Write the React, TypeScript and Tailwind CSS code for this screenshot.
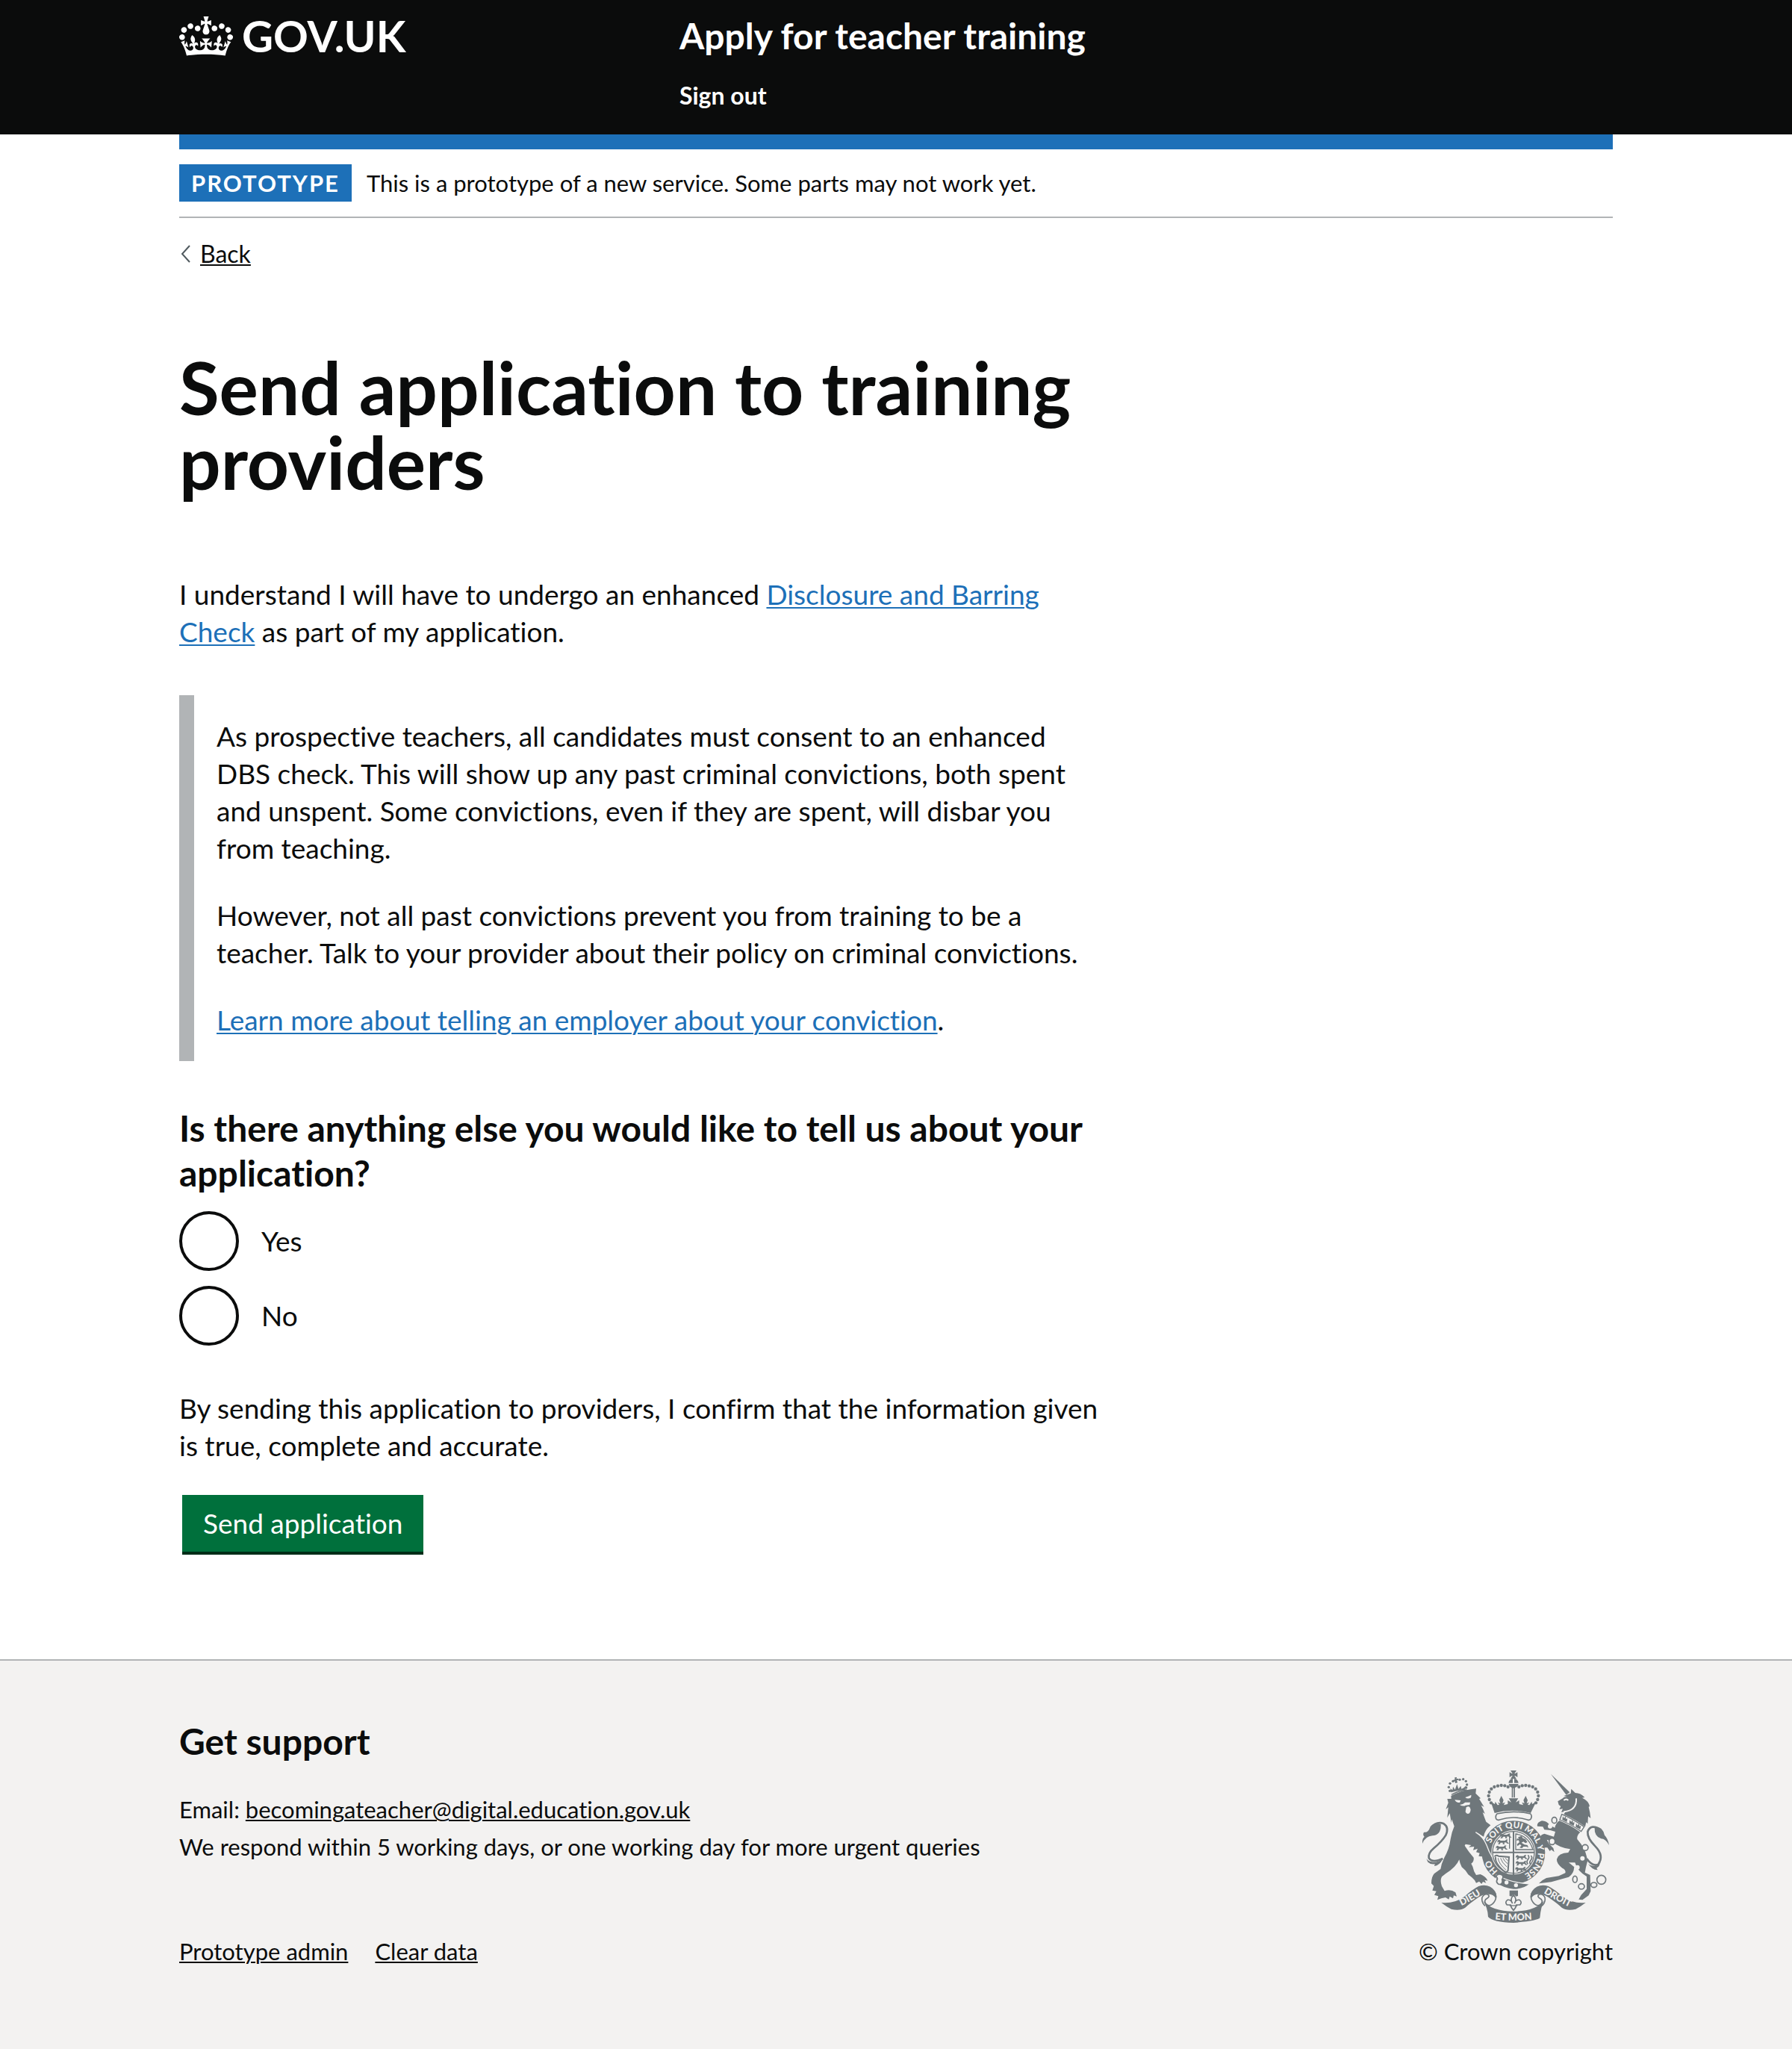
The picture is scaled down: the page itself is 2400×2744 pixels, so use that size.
import type { ReactNode } from "react";

const container = "mx-auto w-full max-w-[1920px]";
const darkLink = "underline decoration-2 underline-offset-2";
const blueLink = "text-[#1d70b8] underline decoration-2 underline-offset-[3px]";

function Crown() {
  return (
    <svg viewBox="0 0 132 97" className="h-[53px] w-[72px] shrink-0" fill="currentColor" aria-hidden="true">
      <path
        fillRule="evenodd"
        d="M25 30.2c3.5 1.5 7.7-.2 9.1-3.7 1.5-3.6-.2-7.8-3.9-9.2-3.6-1.4-7.6.3-9.1 3.9-1.4 3.5.3 7.5 3.9 9zM9 39.5c3.6 1.5 7.8-.2 9.2-3.7 1.5-3.6-.2-7.8-3.9-9.1-3.6-1.5-7.6.2-9.1 3.8-1.4 3.5.3 7.5 3.8 9zM4.4 57.2c3.5 1.5 7.7-.2 9.1-3.8 1.5-3.6-.2-7.7-3.9-9.1-3.5-1.5-7.6.3-9.1 3.8-1.4 3.5.3 7.6 3.9 9.1zm38.3-21.4c3.5 1.5 7.7-.2 9.1-3.8 1.5-3.6-.2-7.7-3.9-9.1-3.6-1.5-7.6.3-9.1 3.8-1.3 3.6.4 7.7 3.9 9.1zm64.4-5.6c-3.6 1.5-7.8-.2-9.1-3.7-1.5-3.6.2-7.8 3.8-9.2 3.6-1.4 7.7.3 9.2 3.9 1.3 3.5-.4 7.5-3.9 9zm15.9 9.3c-3.6 1.5-7.7-.2-9.1-3.7-1.5-3.6.2-7.8 3.7-9.1 3.6-1.5 7.7.2 9.2 3.8 1.5 3.5-.3 7.5-3.8 9zm4.7 17.7c-3.6 1.5-7.8-.2-9.2-3.8-1.5-3.6.2-7.7 3.9-9.1 3.6-1.5 7.7.3 9.2 3.8 1.3 3.5-.4 7.6-3.9 9.1zM89.3 35.8c-3.6 1.5-7.8-.2-9.2-3.8-1.4-3.6.2-7.7 3.9-9.1 3.6-1.5 7.7.3 9.2 3.8 1.4 3.6-.3 7.7-3.9 9.1zM69.7 17.7l8.9 4.7V9.3l-8.9 2.8c-.2-.3-.5-.6-.9-.9L72.4 0H59.6l3.5 11.2c-.3.3-.6.5-.9.9l-8.8-2.8v13.1l8.8-4.7c.3.3.6.7.9.9l-5 15.4v.1c-.2.8-.4 1.6-.4 2.4 0 4.1 3.1 7.5 7 8.1h.2c.3 0 .7.1 1 .1.4 0 .7 0 1-.1h.2c4-.6 7.1-4.1 7.1-8.1 0-.8-.1-1.7-.4-2.4V34l-5.1-15.4c.4-.2.7-.6 1-.9zM66 92.8c16.9 0 32.8 1.1 47.1 3.2 4-16.9 8.9-26.7 14-33.5l-9.6-3.4c1 4.9 1.1 7.2 0 10.2-1.5-1.4-3-4.3-4.2-8.7L108.6 76c2.8-2 5-3.2 7.5-3.3-4.4 9.4-10 11.9-13.6 11.2-4.3-.8-6.3-4.6-5.6-7.9 1-4.7 5.7-5.9 8-.5 4.3-8.7-3-11.4-7.6-8.8 7.1-7.2 7.9-13.5 2.1-21.1-8 6.1-8.1 12.3-4.5 20.8-4.7-5.4-12.1-2.5-9.5 6.2 3.4-5.2 7.9-2 7.2 3.1-.6 4.3-6.4 7.8-13.5 7.2-10.3-.9-10.9-8-11.2-13.8 2.5-.5 7.1 1.8 11 7.3L80.2 60c-4.1 4.4-8 5.3-12.3 5.4 1.4-4.4 8-11.6 8-11.6H55.5s6.4 7.2 7.9 11.6c-4.2-.1-8-1-12.3-5.4l1.4 16.4c3.9-5.5 8.5-7.7 10.9-7.3-.3 5.8-.9 12.8-11.1 13.8-7.2.6-12.9-2.9-13.5-7.2-.7-5 3.8-8.3 7.1-3.1 2.7-8.7-4.6-11.6-9.4-6.2 3.7-8.5 3.6-14.7-4.6-20.8-5.8 7.6-5 13.9 2.2 21.1-4.7-2.6-11.9.1-7.7 8.8 2.3-5.5 7.1-4.2 8.1.5.7 3.3-1.3 7.1-5.7 7.9-3.5.7-9-1.8-13.5-11.2 2.5.1 4.7 1.3 7.5 3.3l-4.7-15.4c-1.2 4.4-2.7 7.2-4.3 8.7-1.1-3-.9-5.3 0-10.2l-9.5 3.4c5 6.9 9.9 16.7 14 33.5 14.8-2.1 30.8-3.2 47.7-3.2z"
      />
    </svg>
  );
}

/* Half of the dots on the arches of the large crown; the rest are mirrored about x = 438. */
const archDots = [
  [416, 126],
  [403, 121],
  [389, 120],
  [375, 122],
  [361, 126],
  [349, 134],
  [341, 147],
  [338, 162],
  [341, 177],
  [348, 190],
];

const lionCrownDots = [
  [182, 142],
  [178, 127],
  [183, 112],
  [195, 103],
  [222, 97],
  [236, 95],
  [247, 103],
  [251, 117],
  [248, 129],
];

const mottoGap = "\u00a0".repeat(8);

function PassantLion({ x, y }: { x: number; y: number }) {
  return (
    <path
      transform={`translate(${x} ${y})`}
      d="M0 3l7-3 5 4 18 0 6-5 6 1-4 4 2 6 7 5-8 1-5-5-8 1 3 6-8 0 0-6-9 0-3 6-8 0 4-5-1-5-5 4z"
    />
  );
}

function RoyalArms() {
  return (
    <svg viewBox="72 60 750 612" className="h-[204px] w-[250px]" fill="#6f777b" role="img" aria-label="Royal coat of arms">
      <defs>
        <path id="garter-line" d="M438 487A98 98 0 1 1 438.1 487" />
        <path id="dieu-line" d="M208 613Q276 582 326 546" />
        <path id="mon-line" d="M346 657Q438 667 530 657" />
        <path id="droit-line" d="M550 547Q600 578 672 613" />
      </defs>

      {/* Large crown */}
      <path d="M426 60h24l-8 12 2 1 10-6v20l-10-6-2 1 8 12h-24l8-12-2-1-10 6V67l10 6 2-1z" />
      <path d="M418 110q2-15 17-17v17zM441 93q15 2 17 17h-17zM419 114h39q-2 12-14 15v40h-5v-38h-3v38h-5v-40q-10-3-12-15z" />
      {archDots.map(([x, y]) => (
        <g key={`${x}-${y}`}>
          <circle cx={x} cy={y} r="6.5" />
          <circle cx={876 - x} cy={y} r="6.5" />
        </g>
      ))}
      <path d="M347 186l16 9 2-10 9 14 7-1-6-10 10 4-4-13 8-17 9 17-4 13 10-4-5 11 16-4 0-15 14 8-10-16h38l-10 16 14-8 0 15 16 4-5-11 10 4-4-13 9-17 8 17-4 13 10-4-6 10 7 1 9-14 2 10 16-9-22 45q-75-20-145 0z" />
      <path
        d="M372 234q66-16 134 0 8 8 2 20-6 8-14 4-56-18-112 0-8 4-14-4-4-12 4-20z"
        fill="#f3f2f1"
        stroke="#6f777b"
        strokeWidth="5"
      />

      {/* Garter */}
      <circle cx="438" cy="389" r="108" fill="#f3f2f1" stroke="#6f777b" strokeWidth="38" />
      <circle cx="438" cy="389" r="84" fill="none" stroke="#6f777b" strokeWidth="4" />
      <text fill="#f3f2f1" fontFamily="Lato, sans-serif" fontWeight="900" fontSize="35">
        <textPath href="#garter-line" startOffset="11%">{`HO${mottoGap}SOIT QUI MAL Y PENSE`}</textPath>
      </text>

      {/* Shield quarters */}
      <path d="M354 386h168v6H354zM435 306h6v180h-6z" />
      <PassantLion x={384} y={314} />
      <PassantLion x={374} y={338} />
      <PassantLion x={368} y={362} />
      <PassantLion x={448} y={400} />
      <PassantLion x={448} y={424} />
      <PassantLion x={446} y={448} />
      <path d="M496 400q8 8 0 18t0 18M508 402q8 8 0 18t-2 16" fill="none" stroke="#6f777b" strokeWidth="5" />
      <path d="M422 318l0 56M414 316l8 10" fill="none" stroke="#6f777b" strokeWidth="4" />
      <path d="M447 378v-63q52 8 69 63z" fill="none" stroke="#6f777b" strokeWidth="4" />
      <path
        d="M456 328l14-5 6 9 10 4 8 12-8 4-8-6-8 4 12 8 12 2 4 10-8-4-12 0-6 6-10-2 8-8-6-6-10 8-2-8 10-8-4-8-8 2 2-8 8 0z"
      />
      <path d="M362 406q6-8 16-2l42 4-4 54-10 10M366 408q-4 26 40 62" fill="none" stroke="#6f777b" strokeWidth="6" />
      <path
        d="M376 412q2 22 32 48M386 412q4 16 26 36M396 412q4 12 18 22M406 412q2 6 10 10"
        fill="none"
        stroke="#6f777b"
        strokeWidth="3"
      />

      {/* Strap and pendant */}
      <path d="M370 480q58 32 134 36-24 22-66 22-38-2-72-26z" stroke="#f3f2f1" strokeWidth="4" />
      <circle cx="410" cy="510" r="8" fill="#f3f2f1" />
      <circle cx="448" cy="521" r="8" fill="#f3f2f1" />
      <path
        d="M392 480q-18-8-24 6 10 8 2 18 4 18 18 12 8-6 4-18 8-10 0-18z"
        fill="#f3f2f1"
        stroke="#6f777b"
        strokeWidth="5"
      />
      <path d="M422 542h34v22l-8 2q-10-16-18 0l-8-2z" />
      <path
        d="M438 560q16 18 4 34 6-16 20-14 12 8 2 20h-14q-2 12-12 22-10-10-12-22h-14q-10-12 2-20 14-2 20 14-12-16 4-34z"
        fill="#f3f2f1"
        stroke="#6f777b"
        strokeWidth="5"
      />
      <path d="M422 603h32" stroke="#6f777b" strokeWidth="4" />

      {/* Lion */}
      {lionCrownDots.map(([x, y]) => (
        <circle key={`${x}-${y}`} cx={x} cy={y} r="5" />
      ))}
      <path d="M202 88l8-1-1 7 7-2 1 8-7-1 3 10-9 2-2-9-6 4-2-7 8-2z" />
      <path d="M187 148l-3-16 9 7 2-14 8 12 8-22 6 19 9-12 3 12 9-4 8-8-1 15q-30 2-58 11z" />
      <path d="M189 157q28-16 62-19" fill="none" stroke="#6f777b" strokeWidth="4" />
      <path d="M172 174L188 174L187 162Q224 142 266 136L288 133L286 152L306 172L300 174L320 206L308 200Q315 212 323 234L314 228Q322 252 328 266L346 280Q322 300 318 326L290 308Q322 336 332 365Q336 386 350 406L344 416L334 406L334 420L322 412L316 418L312 406L298 404L302 392L288 388L294 374L276 380L280 366L258 368L268 360L245 356L242 362Q260 390 278 410Q280 426 268 434L274 446Q278 466 288 480L305 477Q328 486 334 503L322 500L328 512L315 507L310 516L300 506L288 512L282 501Q270 488 256 478Q248 462 230 448Q222 432 220 418Q208 448 165 475L150 487Q142 502 150 525L161 544Q186 536 205 550L210 566L198 562L195 574L182 566L178 578L165 570L148 574L132 580L136 565L120 560L128 545L112 542L118 524L108 514Q108 486 120 474L145 456Q148 434 160 410Q180 376 185 336Q190 306 200 284L190 256L188 270L182 232L172 250L176 208L166 216L176 190Z" />
      <path
        d="M202 178l24 2-4 9q-14 2-20-11zM244 168q14-4 24-10 2 12-8 14-10 2-16-4zM222 198q14-2 22-10l20 0-2 10-16 2q-10 6-24-2zM248 208q14-10 18 10-2 16-12 16-12-4-8-14z"
        fill="#f3f2f1"
      />
      <path d="M286 308q32 20 44 52 8 24 22 48" fill="none" stroke="#f3f2f1" strokeWidth="4" />
      <path
        d="M106 290q24-28 52-16 22 14 8 46-16 26-48 52-24 20-20 40 14 22 56 2"
        fill="none"
        stroke="#6f777b"
        strokeWidth="8"
      />
      <path d="M146 276q2 44-34 46-28 2-40 32-2-20 8-28-8-8-2-18 18 2 24-18 14-24 44-14zM88 414q8 12 26 14 20 2 40-12-14 26-34 28l2-8q-18 2-28-8z" />

      {/* Unicorn */}
      <path d="M588 74l76 74-14 10z" />
      <path d="M640 162l28-10 2-18 16 16q22 0 38 18l-10 2q26 12 30 34l-4 2q6 22 8 46l-10-8-2 30-6-6-4 18q-30-24-86-50l8-12-18 4 6-14-14 2 6-12-8-6-4-14 20-12q4-8 18-6z" />
      <path d="M690 172q4 48-50 54M640 180q10-8 18 0" fill="none" stroke="#f3f2f1" strokeWidth="6" />
      <path d="M602 206l18-4-8 8z" fill="#f3f2f1" />
      <path d="M632 236q42 18 90 50l-12 19q-40-28-86-47z" fill="#f3f2f1" stroke="#6f777b" strokeWidth="4" />
      <path d="M634 258l2-14 6 8 5-9 2 12 6-2-3 14zM662 273l2-14 6 8 5-9 2 12 6-2-3 14zM688 287l2-14 6 8 5-9 2 12 6-2-3 14z" />
      <path d="M622 262Q668 280 706 308Q692 320 694 336L710 356Q732 388 735 425Q728 450 725 470L746 480L748 545L740 562L715 580L700 578L710 560L732 536L732 486Q695 465 685 430L660 430L682 448Q680 476 660 488L590 508L540 514Q552 500 570 492L620 484L646 472Q650 460 634 452Q610 434 612 416Q618 392 658 390L666 376Q620 370 594 345L572 338L580 354L598 372L602 388L590 378L584 384L574 370L560 370L544 332Q544 318 562 314L600 326L606 306L586 300L562 298L556 286L534 284Q530 270 552 262Q572 262 584 280L604 290Q608 272 622 262Z" />
      <path
        d="M790 298q-42-26-54 8-2 26 30 58 38 38 12 74-24 8-46-24"
        fill="none"
        stroke="#6f777b"
        strokeWidth="8"
      />
      <path d="M764 290q34-4 40 30 14 14 18 40-14-26-32-26-28-10-26-44zM738 434q10 12 36 8l10-12q2 16-12 22l4 8q-24-2-38-26z" />
      <g fill="#f3f2f1" stroke="#6f777b" strokeWidth="5">
        <ellipse cx="602" cy="260" rx="10" ry="12" />
        <ellipse cx="593" cy="345" rx="12" ry="13" />
        <circle cx="726" cy="370" r="12" />
        <ellipse cx="685" cy="497" rx="9" ry="13" />
        <ellipse cx="711" cy="526" rx="12" ry="11" />
        <ellipse cx="761" cy="520" rx="12" ry="10" />
        <circle cx="791" cy="499" r="18" />
      </g>
      <g fill="#f3f2f1">
        <circle cx="585" cy="284" r="9" />
        <circle cx="715" cy="413" r="9" />
        <circle cx="695" cy="449" r="9" />
      </g>

      {/* Scroll */}
      <path d="M148 591q50 6 92-24 34-30 58-42 40-12 64 18 12 18 6 32-10-18-30-18-14-2-40 12-38 26-54 42-20 14-56 6-20-10-40-26zM728 591q-50 6-92-24-34-30-58-42-40-12-64 18-12 18-6 32 10-18 30-18 14-2 40 12 38 26 54 42 20 14 56 6 20-10 40-26z" />
      <path
        d="M362 548q14 26-8 48-16 14-28-2-8-12 6-20 14-10 2-16-14-4-22 12-4 20 12 34M514 548q-14 26 8 48 16 14 28-2 8-12-6-20-14-10-2-16 14-4 22 12 4 20-12 34"
        fill="none"
        stroke="#6f777b"
        strokeWidth="5"
      />
      <path d="M314 582q36 44 124 44t124-44q-14 24-18 70-8 12-106 20-82-2-102-24-2-40-22-66z" />
      <g fill="#f3f2f1" fontFamily="Lato, sans-serif" fontWeight="900" fontSize="38" textAnchor="middle">
        <text>
          <textPath href="#dieu-line" startOffset="50%">
            DIEU
          </textPath>
        </text>
        <text>
          <textPath href="#mon-line" startOffset="50%">
            ET MON
          </textPath>
        </text>
        <text>
          <textPath href="#droit-line" startOffset="50%">
            DROIT
          </textPath>
        </text>
      </g>
    </svg>
  );
}

function Radio({ id, children }: { id: string; children: ReactNode }) {
  return (
    <div className="flex items-center">
      <input
        type="radio"
        id={id}
        name="further-information"
        value={id}
        className="size-20 shrink-0 appearance-none rounded-full border-4 border-[#0b0c0c] bg-white checked:bg-[#0b0c0c] checked:shadow-[inset_0_0_0_16px_#fff]"
      />
      <label htmlFor={id} className="pl-[30px]">
        {children}
      </label>
    </div>
  );
}

export default function App() {
  return (
    <div className="bg-white font-['Lato',sans-serif] text-[#0b0c0c] [font-variant-ligatures:none]">
      <header className="bg-[#0b0c0c] text-white">
        <div className={`${container} flex flex-wrap pt-[18px] pb-8`}>
          <a href="#" className="flex h-15 w-[670px] items-center gap-3 text-[58px] leading-[60px] font-bold">
            <Crown />
            GOV.UK
          </a>
          <div className="font-bold">
            <a href="#" className="block text-[48px] leading-[60px]">
              Apply for teacher training
            </a>
            <nav className="mt-[30px]">
              <a href="#" className="block text-[32px] leading-10">
                Sign out
              </a>
            </nav>
          </div>
        </div>
      </header>

      <div className={container}>
        <div className="h-5 bg-[#1d70b8]" />
        <div className="flex items-center gap-5 border-b-2 border-[#b1b4b6] py-5 text-[31px] leading-[50px]">
          <strong className="bg-[#1d70b8] px-4 font-bold tracking-[2px] text-white uppercase">Prototype</strong>
          <span>This is a prototype of a new service. Some parts may not work yet.</span>
        </div>

        <a href="#" className="mt-7 inline-flex items-center text-[32px] leading-10">
          <svg viewBox="0 0 28 24" className="h-6 w-7" fill="none" stroke="#505a5f" strokeWidth="2" aria-hidden="true">
            <path d="M14 1L4 12l10 11" />
          </svg>
          <span className={darkLink}>Back</span>
        </a>

        <main className="mt-[108px] max-w-[1240px] pb-[144px] text-[37px] leading-[50px]">
          <h1 className="text-[98px] leading-[100px] font-bold">Send application to training providers</h1>

          <p className="mt-[103px]">
            I understand I will have to undergo an enhanced{" "}
            <a href="#" className={blueLink}>
              Disclosure and Barring Check
            </a>{" "}
            as part of my application.
          </p>

          <div className="mt-[60px] flex flex-col gap-10 border-l-[20px] border-[#b1b4b6] py-[30px] pl-[30px]">
            <p>
              As prospective teachers, all candidates must consent to an enhanced DBS check. This will show up any past
              criminal convictions, both spent and unspent. Some convictions, even if they are spent, will disbar you
              from teaching.
            </p>
            <p>
              However, not all past convictions prevent you from training to be a teacher. Talk to your provider about
              their policy on criminal convictions.
            </p>
            <p>
              <a href="#" className={blueLink}>
                Learn more about telling an employer about your conviction
              </a>
              .
            </p>
          </div>

          <form onSubmit={(event) => event.preventDefault()}>
            <fieldset className="mt-15">
              <legend className="text-[48px] leading-[60px] font-bold">
                Is there anything else you would like to tell us about your application?
              </legend>
              <div className="mt-[21px] flex flex-col gap-5">
                <Radio id="yes">Yes</Radio>
                <Radio id="no">No</Radio>
              </div>
            </fieldset>

            <p className="mt-[59px]">
              By sending this application to providers, I confirm that the information given is true, complete and
              accurate.
            </p>

            <button
              type="submit"
              className="mx-1 mt-[41px] block bg-[#00703c] px-7 py-[13px] text-white shadow-[0_4px_0_#002d18]"
            >
              Send application
            </button>
          </form>
        </main>
      </div>

      <footer className="border-t-2 border-[#b1b4b6] bg-[#f3f2f1] pt-[78px] pb-[107px] text-[31px] leading-[50px]">
        <div className={`${container} flex items-end justify-between`}>
          <div>
            <h2 className="text-[48px] leading-[60px] font-bold">Get support</h2>
            <p className="mt-9">
              Email:{" "}
              <a href="mailto:becomingateacher@digital.education.gov.uk" className={darkLink}>
                becomingateacher@digital.education.gov.uk
              </a>
            </p>
            <p>We respond within 5 working days, or one working day for more urgent queries</p>
            <nav className="mt-[90px] flex gap-9">
              <a href="#" className={darkLink}>
                Prototype admin
              </a>
              <a href="#" className={darkLink}>
                Clear data
              </a>
            </nav>
          </div>
          <a href="#" className="flex flex-col items-center gap-[13px]">
            <RoyalArms />
            © Crown copyright
          </a>
        </div>
      </footer>
    </div>
  );
}
